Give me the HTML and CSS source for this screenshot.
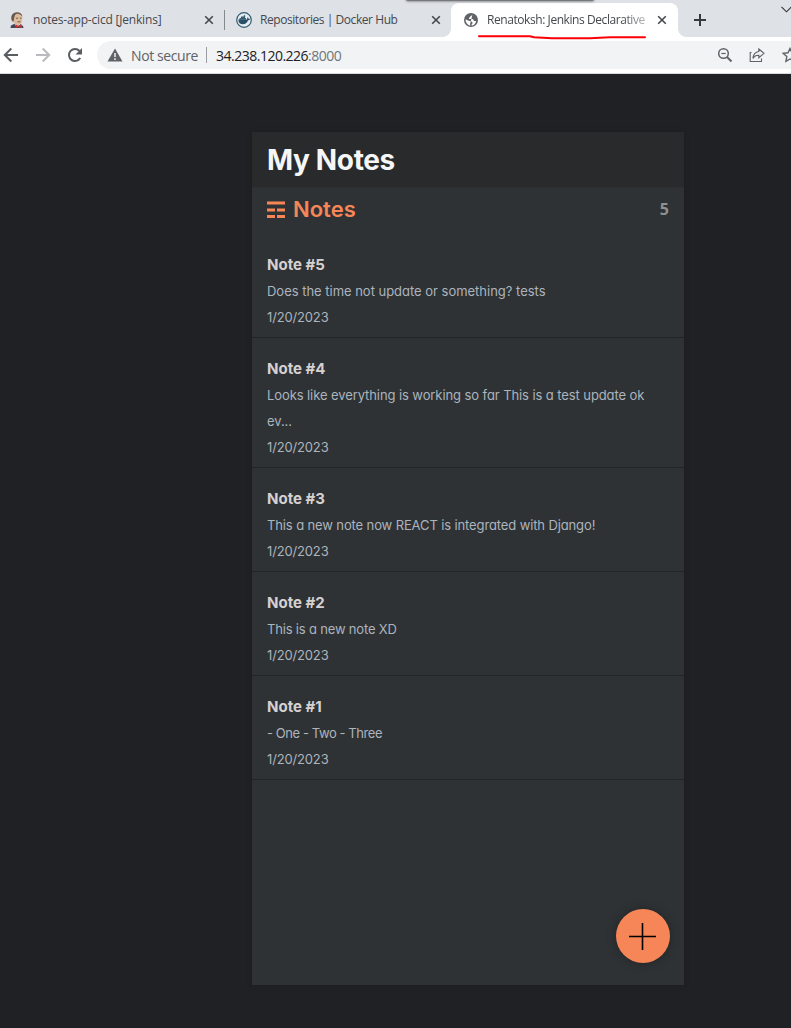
FILE: index.html
```html
<!DOCTYPE html>
<html lang="en">
<head>
<meta charset="utf-8">
<title>My Notes</title>
<link rel="stylesheet" href="styles.css">
</head>
<body>
<div class="browser">
  <div class="tabstrip">
    <div class="overhang"></div>
    <div class="tab tab-first">
      <svg class="favicon" viewBox="0 0 16 16"><path d="M1.500 16l.5-2.500 3-1.500h6l3 2 .5 2z" fill="#454754"/><path d="M5 11l2.500 4 3.500-2v-2H5z" fill="#ddd"/><path d="M3 5.500C3 2 5 .7 8.500.7S13.500 3 13.300 7c-.2 3.500-2 6-4.300 6-3.500 0-5.500-3-6-7.500z" fill="#dcbb9c"/><path d="M2.500 8C1.500 3 4.500.2 8 .3c3 0 5.200 1.500 5.500 4.500C12 3 11 1.800 8 1.700 5.500 2 5.500 5 4.700 8.500L4 10z" fill="#665a50"/><path d="M7 6.200h2M10.800 6.200h1.700M8.500 9.800h3" stroke="#6a5040" stroke-width=".9"/><path d="M6.500 12.500l3 1.300 3.500-1.300V16l-3.500-1-3 1z" fill="#c93338"/></svg>
      <span class="tab-title t1">notes-app-cicd [Jenkins]</span>
      <svg class="close" viewBox="0 0 10 10"><path d="M1.200 1.200l7.600 7.600M8.800 1.200L1.200 8.800"/></svg>
    </div>
    <div class="tab">
      <svg class="favicon" viewBox="0 0 16 16"><circle cx="8" cy="8" r="7.300" fill="#e4edf2" stroke="#35596f" stroke-width="1.200"/><path d="M2.300 7.500h8.700c.4-.6.100-1.500.5-2.200.8.400 1 1 1 1.500.6-.1 1.200 0 1.600.3-.4.900-1.200 1.200-2 1.200-1 2.800-2.800 4-5.200 4-2.800 0-4.400-1.500-4.600-4.800z" fill="#284f66"/><path d="M3.500 6h6.500v1.700H3.500zM5 4.600h4v1.500H5zM7.700 3.200h1.500v1.500H7.700z" fill="#35596f"/></svg>
      <span class="tab-title t2">Repositories | Docker Hub</span>
      <svg class="close" viewBox="0 0 10 10"><path d="M1.200 1.200l7.600 7.600M8.800 1.200L1.200 8.800"/></svg>
    </div>
    <div class="tab active">
      <svg class="favicon" viewBox="0 0 16 16"><circle cx="8" cy="8" r="7" fill="#5f6368"/><path d="M9.500 2.200c-.2 1.300-1 1.500-2 1.700-.4 1-.2 1.500-1.500 1.600v1.600h3.500c1 0 .8 1.900 1.800 1.900h1.800c-.3 2.500-2.200 4.400-4.500 4.700v-1.500c1.200-.4 1.200-2.100 0-2.700-1.500-.6-3.500-.8-6.100-2.300 0 3.300 1.700 5.500 4.600 6.500v-1.500" fill="#fff"/></svg>
      <span class="tab-title t3">Renatoksh: Jenkins Declarative</span>
      <svg class="close" viewBox="0 0 10 10"><path d="M1.200 1.200l7.600 7.600M8.800 1.200L1.200 8.800"/></svg>
      <svg class="marker" viewBox="0 0 170 5"><path d="M2 1.200h51l4 1 18 1h38l20-1h35" fill="none" stroke="#fb0007" stroke-width="2" stroke-linecap="round"/></svg>
    </div>
    <svg class="new-tab" viewBox="0 0 12 12"><path d="M6 0v12M0 6h12" stroke="#36393d" stroke-width="2"/></svg>
    <svg class="chevron" viewBox="0 0 11 7"><path d="M.5.800l5 5 5-5" fill="none" stroke="#333" stroke-width="1.100"/></svg>
  </div>
  <div class="toolbar">
    <svg class="nav" viewBox="0 0 16 16"><path d="M15 8H2M8.300 1.500L1.800 8l6.500 6.500" fill="none" stroke="#5a5d61" stroke-width="2"/></svg>
    <svg class="nav" viewBox="0 0 16 16"><path d="M1 8h13M7.700 1.500L14.200 8l-6.500 6.500" fill="none" stroke="#b9bbbe" stroke-width="2"/></svg>
    <svg class="nav" viewBox="0 0 16 16"><path d="M13.200 11A6 6 0 1 1 12.500 4" fill="none" stroke="#5a5d61" stroke-width="2"/><path d="M15 1v6.500H8.500z" fill="#5a5d61"/></svg>
    <div class="omnibox">
      <svg class="warn" viewBox="0 0 16 14"><path d="M8 .5L15.500 13.500H.5z" fill="#5f6368"/><path d="M8 5v4M8 10.200v1.700" stroke="#f1f3f4" stroke-width="1.500"/></svg>
      <span class="insecure">Not secure</span>
      <span class="divider"></span>
      <span class="url">34.238.120.226<span class="port">:8000</span></span>
      <svg class="tool zoom" viewBox="0 0 16 16"><g fill="none" stroke="#5f6368"><circle cx="6.500" cy="6.500" r="4.800" stroke-width="1.500"/><path d="M10 10l4.500 4.500" stroke-width="2"/><path d="M4.300 6.500h4.400" stroke-width="1.200"/></g></svg>
      <svg class="tool share" viewBox="0 0 16 16"><g fill="none" stroke="#5f6368" stroke-width="1.100"><path d="M2.500 5.500H1.200v9h11.300V11.500"/><path d="M9.800 2L15 6.300l-5.200 4.400V8.300C7 8.200 5.200 9.300 4 11.500 4.300 7.500 6 5 9.800 4.500z"/></g></svg>
      <svg class="tool star" viewBox="0 0 16 16"><path d="M8 1.500l2 4.300 4.700.6-3.500 3.200.9 4.700L8 12l-4.100 2.300.9-4.700L1.300 6.400 6 5.800z" fill="none" stroke="#5f6368" stroke-width="1.400"/></svg>
    </div>
  </div>
</div>
<main class="page">
  <div class="app">
    <header class="app-header"><h1>My Notes</h1></header>
    <div class="notes-header">
      <h2><svg class="trigram" viewBox="0 0 18 17"><path d="M0 1.500h18M0 8.500h8M10 8.500h8M0 15h8M10 15h8" stroke="#f68657" stroke-width="2.800"/></svg><span>Notes</span></h2>
      <span class="count">5</span>
    </div>
    <div class="notes-list">
      <article class="note"><h3>Note #5</h3><p class="n5">Does the time not update or something? tests</p><p class="date">1/20/2023</p></article>
      <article class="note"><h3>Note #4</h3><p class="n4">Looks like everything is working so far This is a test update ok<br>ev...</p><p class="date">1/20/2023</p></article>
      <article class="note"><h3>Note #3</h3><p class="n3">This a new note now REACT is integrated with Django!</p><p class="date">1/20/2023</p></article>
      <article class="note"><h3>Note #2</h3><p class="n2">This is a new note XD</p><p class="date">1/20/2023</p></article>
      <article class="note"><h3>Note #1</h3><p class="n1">- One - Two - Three</p><p class="date">1/20/2023</p></article>
    </div>
    <button class="add" aria-label="Add note"><svg viewBox="0 0 27 27"><path d="M13.500 0v27M0 13.500h27" stroke="#000" stroke-width="1.600"/></svg></button>
  </div>
</main>
</body>
</html>
```
FILE: styles.css
```css
* { box-sizing: border-box; margin: 0; padding: 0; }
body { width: 791px; height: 1028px; overflow: hidden; display: flex; flex-direction: column; background: #202124; font-family: Inter, sans-serif; }
svg { display: block; flex: none; }
.browser { font-family: "Open Sans", "Noto Sans", sans-serif; overflow: hidden; height: 74px; flex: none; border-bottom: 1px solid #d8dadd; background: #fff; }
.tabstrip { position: relative; display: flex; align-items: center; height: 37px; background: #dee1e6; }
.overhang { position: absolute; left: 406px; top: -6px; width: 188px; height: 7px; background: #77787b; box-shadow: 0 0 3px #555; border-radius: 2px; z-index: 2; }
.tab { position: relative; flex: none; width: 226px; height: 34px; margin-top: 3px; display: flex; align-items: center; padding: 0 10px 0 11px; }
.tab-first { width: 225px; padding: 0 11px 0 9px; }
.tab-first::after { content: ""; position: absolute; right: 0; top: 7px; width: 1px; height: 20px; background: #85888d; }
.active { background: #fff; border-radius: 8px 8px 0 0; width: 227px; padding: 0 11px 0 12px; }
.active::before, .active::after { content: ""; position: absolute; bottom: 0; width: 8px; height: 8px; }
.active::before { left: -8px; background: radial-gradient(circle at 0 0, #dee1e6 7.5px, #fff 8px); }
.active::after { right: -8px; background: radial-gradient(circle at 100% 0, #dee1e6 7.5px, #fff 8px); }
.favicon { width: 16px; height: 16px; margin-right: 8px; }
.tab-title { flex: 1; font-size: 12px; line-height: 16px; color: #45484c; white-space: nowrap; }
.t1 { letter-spacing: -.19px; }
.t2 { letter-spacing: -.44px; }
.t3 { letter-spacing: -.43px; }
.active .tab-title { flex: none; width: 163px; -webkit-mask-image: linear-gradient(90deg, #000 135px, transparent 172px); mask-image: linear-gradient(90deg, #000 135px, transparent 172px); }
.active .close { margin-left: auto; }
.close { width: 10px; height: 10px; fill: none; stroke: #45484c; stroke-width: 1.6; }
.marker { position: absolute; left: 26px; top: 32px; width: 170px; height: 5px; z-index: 2; overflow: visible; }
.new-tab { width: 12px; height: 12px; margin: 3px 0 0 16px; }
.chevron { position: absolute; left: 781px; top: 6px; width: 11px; height: 7px; }
.toolbar { display: flex; align-items: center; height: 36px; padding-left: 3px; gap: 16px; }
.nav { width: 16px; height: 16px; }
.omnibox { flex: none; display: flex; align-items: center; width: 720px; height: 28px; margin-left: -2px; padding-left: 10px; border-radius: 14px 0 0 14px; background: #f1f3f4; font-size: 14px; }
.warn { width: 16px; height: 14px; }
.insecure { width: 67px; margin-left: 8px; color: #5f6368; white-space: nowrap; letter-spacing: -.4px; }
.divider { width: 1px; height: 16px; margin: 0 9px 0 8px; background: #9a9da1; }
.url { width: 501px; color: #202124; letter-spacing: -.5px; }
.port { color: #70757a; }
.tool { width: 16px; height: 16px; }
.share { margin-left: 16px; }
.star { margin-left: 17px; }
.page { flex: 1; padding: 58px 0 0 252px; }
.app { width: 432px; height: 853px; display: flex; flex-direction: column; background: #2e3235; box-shadow: 0 0 4px #1c1d20; }
.app-header { height: 56px; padding: 0 15px; display: flex; align-items: center; background: #292a2c; border-bottom: 1px solid #2c2e31; }
h1 { font-size: 28px; line-height: 36px; font-weight: 700; letter-spacing: -.35px; color: #f5f6f7; }
.notes-header { height: 46px; padding: 4px 15px 0; display: flex; justify-content: space-between; }
h2 { display: flex; align-items: center; gap: 8px; height: 34px; color: #f68657; font-size: 22px; font-weight: 600; }
.trigram { width: 18px; height: 18px; margin-top: 1px; }
.count { color: #8f9090; font: 700 16px/34px "Noto Sans", sans-serif; }
.note { padding: 18px 15px 7px; border-bottom: 1px solid #222427; }
.note h3 { font-size: 15px; line-height: 26px; font-weight: 700; color: #d6d1d1; }
.note p { font-size: 13px; line-height: 26px; font-weight: 400; color: #acb4bd; white-space: nowrap; font-feature-settings: "cv11" 1; }
.note .n5 { letter-spacing: -.02px; }
.note .n4 { letter-spacing: -.09px; }
.note .n3 { letter-spacing: -.12px; }
.note .n2 { letter-spacing: -.18px; }
.note .n1 { letter-spacing: -.42px; }
.note .date { letter-spacing: -.15px; }
.add { align-self: flex-end; margin: auto 14px 22px 0; width: 54px; height: 54px; border: 0; border-radius: 50%; background: #f68657; display: grid; place-items: center; box-shadow: 0 0 8px #222427; }
.add svg { width: 27px; height: 27px; margin-right: 1px; }
```
